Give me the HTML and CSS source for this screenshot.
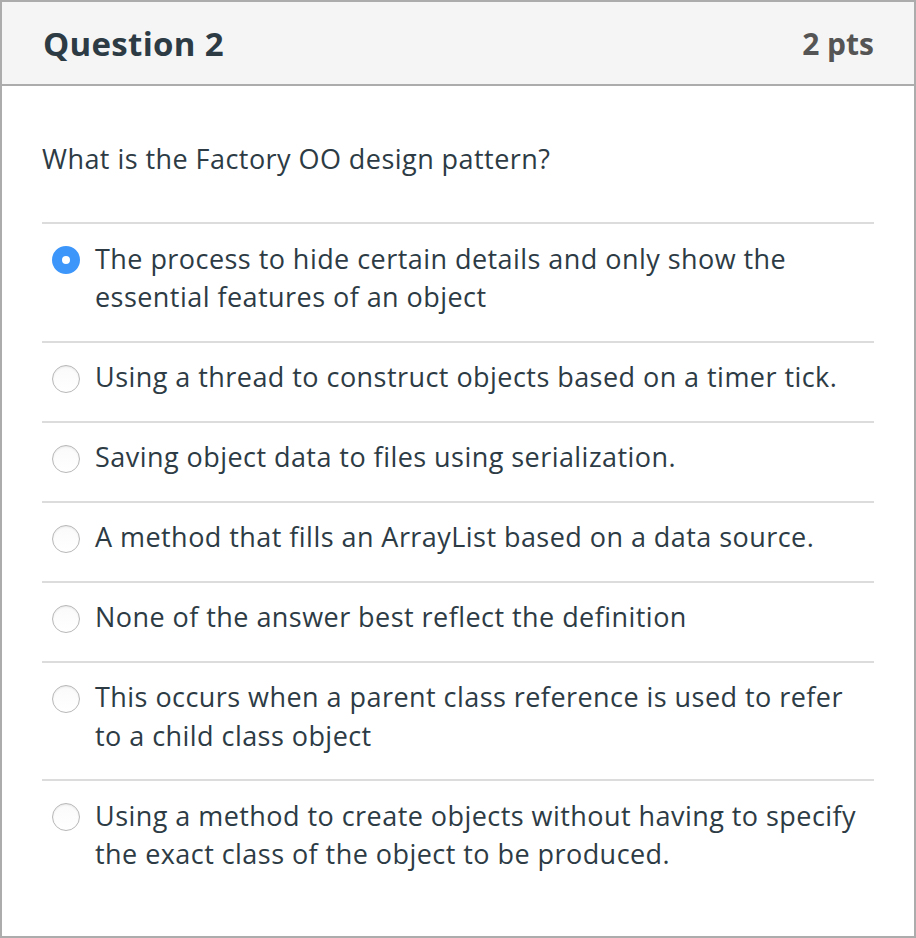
FILE: index.html
```html
<!DOCTYPE html>
<html>
<head>
<meta charset="utf-8">
<link rel="stylesheet" href="styles.css">
</head>
<body>
<div class="question">
  <div class="header">
    <h2 class="title">Question 2</h2>
    <span class="pts">2 pts</span>
  </div>
  <div class="content">
    <p class="prompt">What is the Factory OO design pattern?</p>
    <div class="answers">
      <div class="answer">
        <span class="radio selected"></span>
        <span class="label">The process to hide certain details and only show the essential features of an object</span>
      </div>
      <div class="answer">
        <span class="radio"></span>
        <span class="label">Using a thread to construct objects based on a timer tick.</span>
      </div>
      <div class="answer">
        <span class="radio"></span>
        <span class="label">Saving object data to files using serialization.</span>
      </div>
      <div class="answer">
        <span class="radio"></span>
        <span class="label">A method that fills an ArrayList based on a data source.</span>
      </div>
      <div class="answer">
        <span class="radio"></span>
        <span class="label">None of the answer best reflect the definition</span>
      </div>
      <div class="answer">
        <span class="radio"></span>
        <span class="label">This occurs when a parent class reference is used to refer to a child class object</span>
      </div>
      <div class="answer">
        <span class="radio"></span>
        <span class="label">Using a method to create objects without having to specify the exact class of the object to be produced.</span>
      </div>
    </div>
  </div>
</div>
</body>
</html>
```
FILE: styles.css
```css
html, body {
  margin: 0;
  padding: 0;
  background: #fff;
}
body {
  font-family: "Open Sans", "Liberation Sans", sans-serif;
  color: #2d3b45;
}
.question {
  box-sizing: border-box;
  width: 916px;
  height: 938px;
  border: 2px solid #acacac;
}
.header {
  box-sizing: border-box;
  height: 84px;
  background: #f5f5f5;
  border-bottom: 2px solid #acacac;
  display: flex;
  align-items: center;
  justify-content: space-between;
  padding: 0 40px 0 41px;
}
.title {
  margin: 0;
  font-size: 33px;
  letter-spacing: 0.3px;
  font-weight: 700;
  color: #2d3b45;
}
.pts {
  font-size: 30px;
  font-weight: 700;
  color: #555;
}
.content {
  padding: 0 40px;
}
.prompt {
  margin: 0;
  padding: 53px 0 44px;
  font-size: 27px;
  letter-spacing: 0.45px;
  line-height: 39px;
}
.answer {
  display: flex;
  align-items: flex-start;
  border-top: 2px solid #dcdcdc;
  padding: 15.5px 0 24px;
}
.radio {
  flex: none;
  box-sizing: border-box;
  width: 28px;
  height: 28px;
  border-radius: 50%;
  margin: 6.5px 15px 0 10px;
  border: 1px solid #b8b8b8;
  background: linear-gradient(#fafafa, #fff);
  box-shadow: inset 0 1px 2px rgba(0,0,0,0.08);
}
.radio.selected {
  border: 10px solid #3d97fb;
  background: #fff;
  box-shadow: none;
}
.label {
  font-size: 27px;
  letter-spacing: 0.45px;
  line-height: 38.5px;
}
```
